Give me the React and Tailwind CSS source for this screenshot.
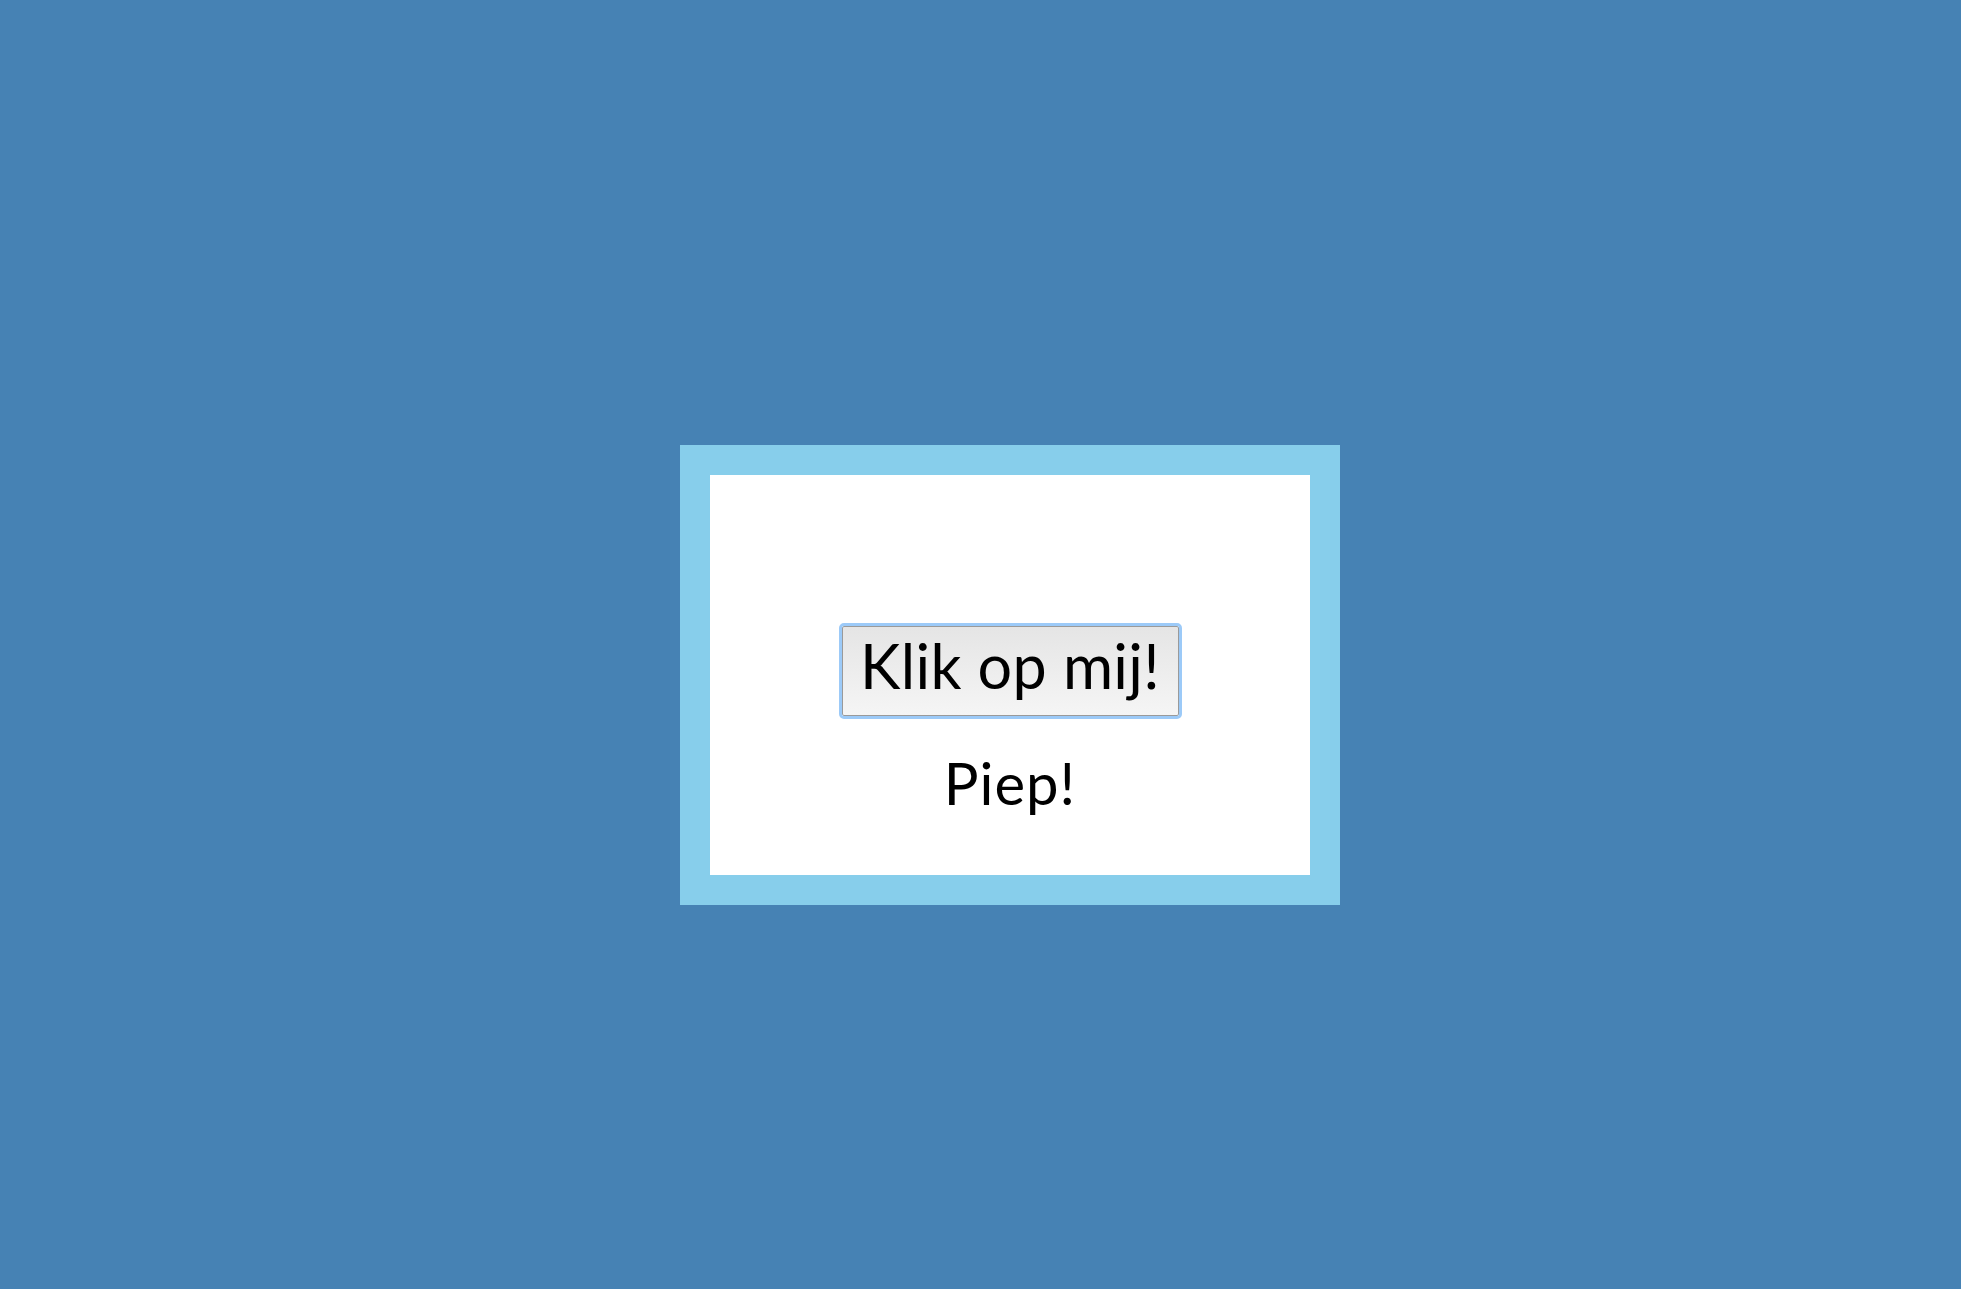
import { useState } from "react";

export default function App() {
  const [count, setCount] = useState(0);

  return (
    <div className="min-h-screen w-full bg-[#4682b4] pl-[680px] pt-[445px] font-['Lato',sans-serif] text-black">
      <div className="w-[660px] h-[460px] bg-[#87ceeb] p-[30px]">
        <div className="w-full h-full bg-white flex flex-col items-center pt-[151px]">
          <button
            onClick={() => setCount(count + 1)}
            className="box-border w-[337px] h-[90px] border border-[#9a9a9a] outline-[3px] outline-solid outline-[#9ccaf8] rounded-[2px] bg-gradient-to-b from-[#e5e5e5] to-[#f5f5f5] pt-[8px] pb-[19px] text-[61px] leading-[61px] tracking-[0.3px] text-black"
          >
            Klik op mij!
          </button>
          <p className="mt-[32px] text-[58px] leading-[1.2] tracking-[1px]">Piep!</p>
        </div>
      </div>
    </div>
  );
}
